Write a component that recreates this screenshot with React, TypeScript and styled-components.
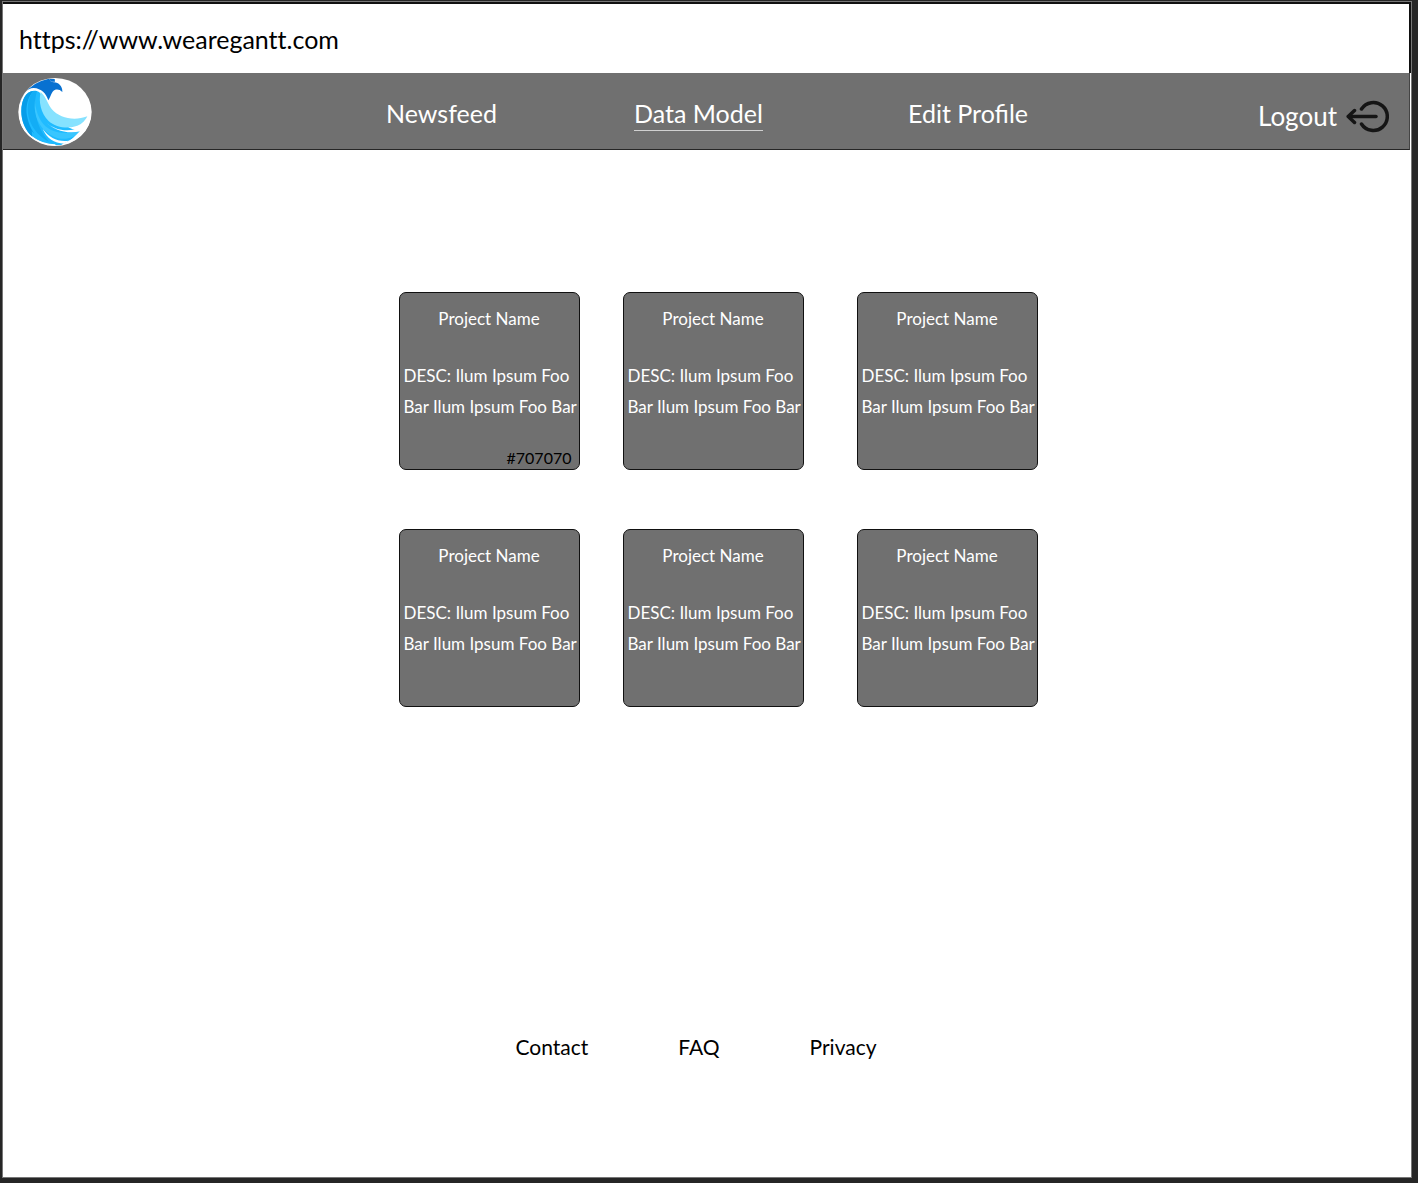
import React from "react";
import styled, { createGlobalStyle } from "styled-components";

const GlobalStyle = createGlobalStyle`
  *, *::before, *::after { box-sizing: border-box; }
  body {
    margin: 0;
    background: #262626;
    color: #000;
    font-family: Lato, "Open Sans", sans-serif;
  }
  h2, p { margin: 0; font-weight: 400; }
`;

const Frame = styled.div`
  min-height: 100vh;
  padding: 1px 6px 5px 2px;
  display: flex;
`;

const Page = styled.div`
  flex: 1;
  display: flex;
  flex-direction: column;
  background: #fff;
  border: 1px solid #777;
`;

const AddressBar = styled.form`
  height: 71px;
  display: flex;
  align-items: center;
  padding: 0 16px;
  border-top: 2px solid #111;
  border-right: 2px solid #111;
`;

const AddressInput = styled.input`
  flex: 1;
  height: 40px;
  padding: 0;
  border: 0;
  outline: 0;
  background: transparent;
  color: #000;
  font: inherit;
  font-size: 25px;
  font-variant-ligatures: none;
`;

const Header = styled.header`
  height: 77px;
  margin-right: 1px;
  display: grid;
  grid-template-columns: 383fr 248fr 274fr 350fr auto;
  align-items: center;
  padding-right: 20px;
  background: #707070;
  border-bottom: 1px solid #262626;
  border-right: 1px solid #444;
`;

const LogoLink = styled.a`
  padding: 2px 0 0 15px;
  display: flex;
`;

const NavLink = styled.a<{ $active?: boolean }>`
  justify-self: start;
  margin-top: 6px;
  padding-bottom: 1px;
  border-bottom: 1px solid ${(p) => (p.$active ? "#d0d0d0" : "transparent")};
  color: #fff;
  font-size: 25px;
  line-height: 32px;
  white-space: nowrap;
  text-decoration: none;
`;

const LogoutButton = styled.button`
  display: flex;
  align-items: center;
  gap: 9px;
  margin-top: 10px;
  padding: 0;
  border: 0;
  background: none;
  color: #fff;
  font: inherit;
  font-size: 26px;
  line-height: 32px;
  cursor: pointer;
`;

const Main = styled.main`
  flex: 1;
  display: flex;
  justify-content: center;
  padding: 142px 0 60px 22px;
`;

const Projects = styled.div`
  display: grid;
  grid-template-columns: 224px 234px 181px;
  align-content: start;
  row-gap: 59px;
`;

const Card = styled.article`
  width: 181px;
  height: 178px;
  display: flex;
  flex-direction: column;
  padding: 14px 4px 0;
  background: #707070;
  border: 1px solid #111;
  border-radius: 7px;
  color: #fff;
  font-size: 17px;
`;

const CardTitle = styled.h2`
  font-size: 17px;
  line-height: 24px;
  text-align: center;
`;

const CardText = styled.p`
  margin-top: 29px;
  line-height: 31px;
  white-space: nowrap;
`;

const ColorCode = styled.p`
  margin-top: 24px;
  padding-right: 3px;
  color: #000;
  font-size: 16px;
  line-height: 24px;
  text-align: right;
`;

const Footer = styled.footer`
  display: flex;
  justify-content: center;
  gap: 90px;
  padding: 0 22px 115px 0;
`;

const FooterLink = styled.a`
  color: #000;
  font-size: 21px;
  line-height: 30px;
  text-decoration: none;
`;

const Logo = () => (
  <svg width="74" height="68" viewBox="54 52 222 204" role="img" aria-label="We Are Gantt">
    <defs>
      <clipPath id="disc">
        <ellipse cx="165" cy="154" rx="109" ry="101" />
      </clipPath>
    </defs>
    <ellipse cx="165" cy="154" rx="110" ry="102" fill="#fff" />
    <g clipPath="url(#disc)">
      <path d="M50 128V45H146C147 58 152 65 162 65C177 66 188 77 187 94C180 87 172 85 164 88C154 93 153 107 145 119C139 99 124 83 101 82C80 82 68 101 59 130Z" fill="#0871d1" />
      <path d="M148 54L164 55L165 63C155 65 149 61 148 54Z" fill="#0871d1" />
      <path d="M64 152C64 116 78 91 102 90C118 90 123 98 126 108C139 151 180 198 240 212C226 229 214 238 200 243L182 254H170C100 250 64 205 64 152Z" fill="#20bbff" />
      <path d="M64 152C64 118 77 93 100 91C84 109 76 137 81 166C85 188 92 203 103 219L95 211L97 230C75 208 64 180 64 152Z" fill="#079de9" />
      <path d="M100 91C82 113 79 151 89 179C99 207 121 231 147 244C125 216 111 190 108 159C105 132 106 107 111 91Z" fill="#13adf5" />
      <path d="M111 92C101 119 106 153 123 181C144 213 184 225 240 212C218 236 190 240 162 228C125 212 105 177 104 140C104 119 107 103 111 92Z" fill="#39c6ff" />
      <path d="M122 94C115 125 123 157 145 180C173 207 225 205 245 188C253 182 259 174 262 167C223 182 179 173 155 145C143 130 139 109 122 94Z" fill="#86e2ff" />
      <path d="M137 184C166 211 206 216 247 200L242 212C200 221 162 209 137 184Z" fill="#fff" />
      <path d="M128 205C149 233 174 244 206 240L192 249C162 248 141 233 128 205Z" fill="#fff" />
      <path d="M244 207L278 168V258H190L210 241Z" fill="#fff" />
    </g>
    <path d="M62 184C74 222 113 251 166 253" fill="none" stroke="#fff" strokeWidth="4" />
  </svg>
);

const LogoutIcon = () => (
  <svg width="43" height="33" viewBox="0 0 43 33" fill="none" stroke="#151515" strokeWidth="3.5" strokeLinecap="round" strokeLinejoin="round" aria-hidden="true">
    <path d="M15.5 9A14 14 0 1 1 15.5 24" />
    <path d="M30 16.5H3" />
    <path d="M8.5 10.5L2.2 16.5L8.5 22.5" />
  </svg>
);

const projects: { id: number; color?: string }[] = [
  { id: 1, color: "#707070" },
  { id: 2 },
  { id: 3 },
  { id: 4 },
  { id: 5 },
  { id: 6 },
];

export default function App() {
  return (
    <Frame>
      <GlobalStyle />
      <Page>
        <AddressBar>
          <AddressInput type="text" aria-label="Address" defaultValue="https://www.wearegantt.com" />
        </AddressBar>
        <Header>
          <LogoLink href="#">
            <Logo />
          </LogoLink>
          <NavLink href="#newsfeed">Newsfeed</NavLink>
          <NavLink href="#data-model" $active aria-current="page">Data Model</NavLink>
          <NavLink href="#profile">Edit Profile</NavLink>
          <LogoutButton type="button">
            Logout
            <LogoutIcon />
          </LogoutButton>
        </Header>
        <Main>
          <Projects>
            {projects.map((project) => (
              <Card key={project.id}>
                <CardTitle>Project Name</CardTitle>
                <CardText>
                  DESC: Ilum Ipsum Foo
                  <br />
                  Bar Ilum Ipsum Foo Bar
                </CardText>
                {project.color && <ColorCode>{project.color}</ColorCode>}
              </Card>
            ))}
          </Projects>
        </Main>
        <Footer>
          <FooterLink href="#contact">Contact</FooterLink>
          <FooterLink href="#faq">FAQ</FooterLink>
          <FooterLink href="#privacy">Privacy</FooterLink>
        </Footer>
      </Page>
    </Frame>
  );
}
